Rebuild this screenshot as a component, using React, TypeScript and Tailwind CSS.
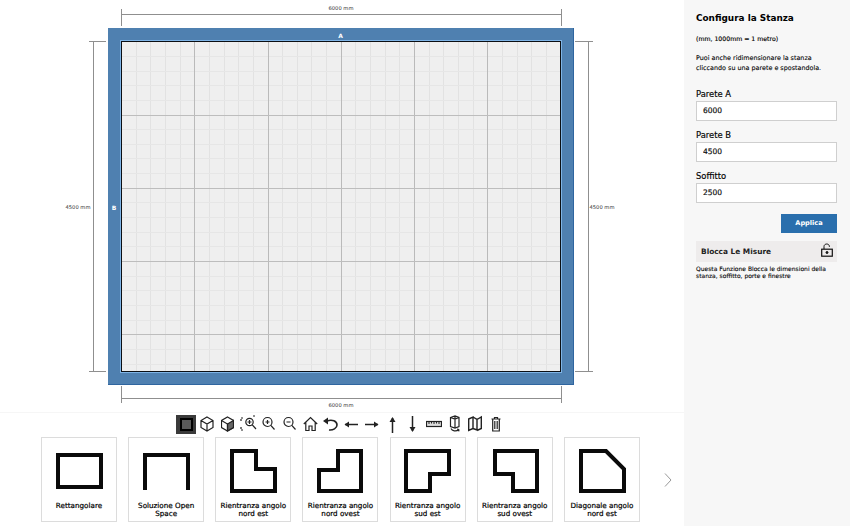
import React from "react";

const font = { fontFamily: "'DejaVu Sans', Verdana, sans-serif" };

const snap = (v: number) => Math.round(v) + 0.5;
const minorX = Array.from({ length: 31 }, (_, i) => snap(120.9 + i * 14.66));
const minorY = Array.from({ length: 23 }, (_, i) => snap(41.2 + i * 14.66));

const RoomCanvas = () => (
  <svg viewBox="0 0 684 412" className="block h-[412px] w-[684px]">
    <rect x="108" y="28" width="466" height="357" fill="#2f659f" />
    <rect x="108" y="28" width="465" height="356" fill="#4f80b0" />
    <rect x="120" y="40" width="442" height="333" fill="#7fb4e6" />
    <rect x="121" y="41" width="440" height="331" fill="#0b0f14" />
    <rect x="122" y="42" width="438" height="329" fill="#efefef" />
    {minorX.map((x, i) =>
      i > 0 && i % 5 !== 0 && x < 560 ? (
        <line key={x} x1={x} x2={x} y1="42" y2="371" stroke="#e2e2e2" strokeWidth="1" />
      ) : null,
    )}
    {minorY.map((y, i) =>
      i > 0 && i % 5 !== 0 && y < 371 ? (
        <line key={y} x1="122" x2="560" y1={y} y2={y} stroke="#e6e6e6" strokeWidth="1" />
      ) : null,
    )}
    {[1, 2, 3, 4, 5].map((i) => (
      <line key={i} x1={snap(120.9 + i * 73.3)} x2={snap(120.9 + i * 73.3)} y1="42" y2="371" stroke="#bababa" strokeWidth="1" />
    ))}
    {[1, 2, 3, 4].map((i) => (
      <line key={i} x1="122" x2="560" y1={snap(41.2 + i * 73.3)} y2={snap(41.2 + i * 73.3)} stroke="#bdbdbd" strokeWidth="1" />
    ))}
    <g stroke="#8f8f8f" strokeWidth="1" fill="none">
      <path d="M121.5 9V26M561.5 9V26M121.5 14.5H561.5" />
      <path d="M121.5 386V403M561.5 386V403M121.5 398.5H561.5" />
      <path d="M89 41.5H106M93.5 41.5V371.5M89 371.5H106" />
      <path d="M575 41.5H593M588.5 41.5V371.5M575 371.5H593" />
    </g>
    <g style={font} fontSize="5.2" fill="#333" textAnchor="middle">
      <text x="341" y="10">6000 mm</text>
      <text x="341" y="407">6000 mm</text>
      <text x="78" y="209">4500 mm</text>
      <text x="602" y="209">4500 mm</text>
      <text x="340.5" y="37.5" fill="#fff" fontSize="6" fontWeight="700">A</text>
      <text x="114" y="210" fill="#fff" fontSize="6" fontWeight="700">B</text>
    </g>
  </svg>
);

const Tool = ({ w, className, children }: { w: number; className: string; children: React.ReactNode }) => (
  <svg
    viewBox={`0 0 ${w} 20`}
    width={w}
    height={20}
    fill="none"
    stroke="#222"
    strokeWidth="1.2"
    className={className}
  >
    {children}
  </svg>
);

const Toolbar = () => (
  <div className="flex h-[24px] items-center pb-[2px] pl-[176px]">
    <div className="flex h-[19px] w-[20px] items-center justify-center bg-[#3a3a3a]">
      <div className="h-[13px] w-[13px] border-2 border-black bg-[#5a5a5a]" />
    </div>
    <Tool w={14} className="ml-[4px]">
      <path d="M7 3L13 6.5V13.5L7 17L1 13.5V6.5ZM1 6.5L7 10L13 6.5M7 10V17" />
    </Tool>
    <Tool w={13} className="ml-[7px]">
      <path d="M6.5 3L12.5 6.5V13.5L6.5 17L.5 13.5V6.5Z" />
      <path d="M6.5 10L12.5 6.5V13.5L6.5 17Z" fill="#666" />
      <path d="M.5 6.5L6.5 10V17" />
    </Tool>
    <Tool w={17} className="ml-[6px]">
      <circle cx="9.5" cy="8" r="3.7" />
      <path d="M12.3 10.8L16 15M9.5 6V10M7.5 8H11.5" />
      <path d="M1 7V4H4M1 13V16H4M13 2H16" strokeDasharray="2 1" />
    </Tool>
    <Tool w={13} className="ml-[5px]">
      <circle cx="5.5" cy="8" r="4.5" />
      <path d="M8.8 11.3L12.5 15.5M3.5 8H7.5M5.5 6V10" />
    </Tool>
    <Tool w={13} className="ml-[8px]">
      <circle cx="5.5" cy="8" r="4.5" />
      <path d="M8.8 11.3L12.5 15.5M3.5 8H7.5" />
    </Tool>
    <Tool w={15} className="ml-[7px]">
      <path d="M.8 10L7.5 3.5L14.2 10M2.8 8.5V16.5H6V12H9V16.5H12.2V8.5" />
    </Tool>
    <Tool w={15} className="ml-[5px]">
      <path d="M4 7C9 5 14 7 14 11C14 14 10 16.5 6 16" strokeWidth="1.6" />
      <path d="M0 7L5 3.5V10.5Z" fill="#222" stroke="none" />
    </Tool>
    <Tool w={14} className="ml-[6px]">
      <path d="M1 10.5H14" strokeWidth="1.5" />
      <path d="M5 7.5L.5 10.5L5 13.5Z" fill="#222" stroke="none" />
    </Tool>
    <Tool w={14} className="ml-[7px]">
      <path d="M0 10.5H13" strokeWidth="1.5" />
      <path d="M9 7.5L13.5 10.5L9 13.5Z" fill="#222" stroke="none" />
    </Tool>
    <Tool w={9} className="ml-[9px]">
      <path d="M4.5 4V19" strokeWidth="1.5" />
      <path d="M1.5 8L4.5 3L7.5 8Z" fill="#222" stroke="none" />
    </Tool>
    <Tool w={9} className="ml-[11px]">
      <path d="M4.5 2V17" strokeWidth="1.5" />
      <path d="M1.5 13L4.5 18L7.5 13Z" fill="#222" stroke="none" />
    </Tool>
    <Tool w={16} className="ml-[9px]">
      <rect x=".5" y="7.5" width="15" height="5" fill="#ddd" />
      <path d="M3 7.5V10M5.5 7.5V9.5M8 7.5V10M10.5 7.5V9.5M13 7.5V10" strokeWidth="1" />
    </Tool>
    <Tool w={11} className="ml-[7px]">
      <path d="M1.5 3.5L6 2L10 3.5V12.5L6 14L1.5 12.5ZM6 2V14M1.5 3.5L6 5L10 3.5" />
      <path d="M2 14.5C3 17 7 18 10 15.5M10 15.5L8 15.2M10 15.5L9.7 17.3" />
    </Tool>
    <Tool w={14} className="ml-[8px]">
      <path d="M.7 5L5 3V14.5L.7 16.5ZM5 3L9 5.5V16L5 14.5M9 5.5L13.3 3V14.5L9 16.5" strokeWidth="1.4" />
    </Tool>
    <Tool w={10} className="ml-[9px]">
      <path d="M.5 5H9.5M3.5 5V3.5H6.5V5M1.7 5V17H8.3V5M3.8 7V15M6.2 7V15" />
    </Tool>
  </div>
);

const shapes = [
  { label: "Rettangolare", d: "M17 18H60V50H17Z" },
  { label: "Soluzione Open Space", d: "M17 53V18H60V53" },
  { label: "Rientranza angolo nord est", d: "M17 14H41V32H60V54H17Z" },
  { label: "Rientranza angolo nord ovest", d: "M36 14H59V54H17V33H36Z" },
  { label: "Rientranza angolo sud est", d: "M16 14H59V37H40V54H16Z" },
  { label: "Rientranza angolo sud ovest", d: "M18 14H60V54H36V37H18Z" },
  { label: "Diagonale angolo nord est", d: "M17 14H42L60 32V54H17Z" },
];

const ShapeCard = ({ label, d }: { label: string; d: string }) => (
  <div className="flex h-[85px] w-[76px] flex-col items-center border border-[#dcdcdc] bg-white">
    <svg viewBox="1 1 74 60" className="h-[60px] w-[74px] shrink-0" fill="none">
      <path d={d} stroke="#0a0a0a" strokeWidth="4" strokeLinejoin="miter" />
    </svg>
    <p className="mt-[4px] px-[2px] text-center text-[7.2px] leading-[8px] text-black [-webkit-text-stroke:0.2px_#000]">
      {label}
    </p>
  </div>
);

const Field = ({ label, value }: { label: string; value: string }) => (
  <div className="flex flex-col">
    <label className="text-[8.4px] leading-[12px] text-black [-webkit-text-stroke:0.15px_#000]">{label}</label>
    <input
      readOnly
      value={value}
      className="mt-[1px] h-[20px] w-[141px] border border-[#cfcfcf] bg-white px-[6px] pb-[2px] text-[7.5px] text-[#111] outline-none [-webkit-text-stroke:0.2px_#111]"
      style={font}
    />
  </div>
);

const SidePanel = () => (
  <aside className="flex h-[526px] w-[166px] shrink-0 flex-col bg-[#f7f7f7] pl-[12px] pt-[12px]">
    <h1 className="text-[8.9px] font-bold leading-[13px] text-black">Configura la Stanza</h1>
    <p className="mt-[10px] text-[6.2px] leading-[8px] text-black [-webkit-text-stroke:0.15px_#000]">
      (mm, 1000mm = 1 metro)
    </p>
    <p className="mt-[10px] w-[130px] text-[6.4px] leading-[10px] text-black [-webkit-text-stroke:0.1px_#000]">
      Puoi anche ridimensionare la stanza cliccando su una parete e spostandola.
    </p>
    <div className="mt-[15px] flex flex-col gap-[8px]">
      <Field label="Parete A" value="6000" />
      <Field label="Parete B" value="4500" />
      <Field label="Soffitto" value="2500" />
    </div>
    <button className="ml-[85px] mt-[11px] h-[19px] w-[56px] bg-[#2a6fad] text-[6.6px] font-bold text-white">
      Applica
    </button>
    <div className="mt-[8px] flex h-[21px] w-[141px] items-center justify-between bg-[#eeecec] pl-[5px] pr-[4px]">
      <span className="pt-[1px] text-[7.4px] font-bold leading-none text-[#222]">Blocca Le Misure</span>
      <svg viewBox="0 0 12 14" className="mb-[4px] h-[14px] w-[12px]" fill="none" stroke="#111">
        <path d="M3 6V3.5C3 2 4.3 1 5.7 1C7.2 1 8.4 2 8.4 3.5V4" />
        <rect x=".7" y="6.2" width="10.6" height="7" strokeWidth="1.2" />
        <circle cx="6" cy="9.5" r="1" fill="#111" />
      </svg>
    </div>
    <p className="mt-[3px] w-[130px] text-[6px] leading-[7px] text-black [-webkit-text-stroke:0.1px_#000]">
      Questa Funzione Blocca le dimensioni della stanza, soffitto, porte e finestre
    </p>
  </aside>
);

export default function App() {
  return (
    <div className="flex h-[526px] w-[850px] overflow-hidden bg-white" style={font}>
      <main className="flex w-[684px] flex-col">
        <RoomCanvas />
        <div className="flex-1 border-t border-[#f6f6f6] bg-white">
          <Toolbar />
          <div className="flex items-center gap-[11.17px] pl-[41px]">
            {shapes.map((s) => (
              <ShapeCard key={s.label} {...s} />
            ))}
            <svg viewBox="0 0 8 14" className="ml-[13px] h-[14px] w-[8px]" fill="none" stroke="#999">
              <path d="M1 .5L7 7L1 13.5" />
            </svg>
          </div>
        </div>
      </main>
      <SidePanel />
    </div>
  );
}
